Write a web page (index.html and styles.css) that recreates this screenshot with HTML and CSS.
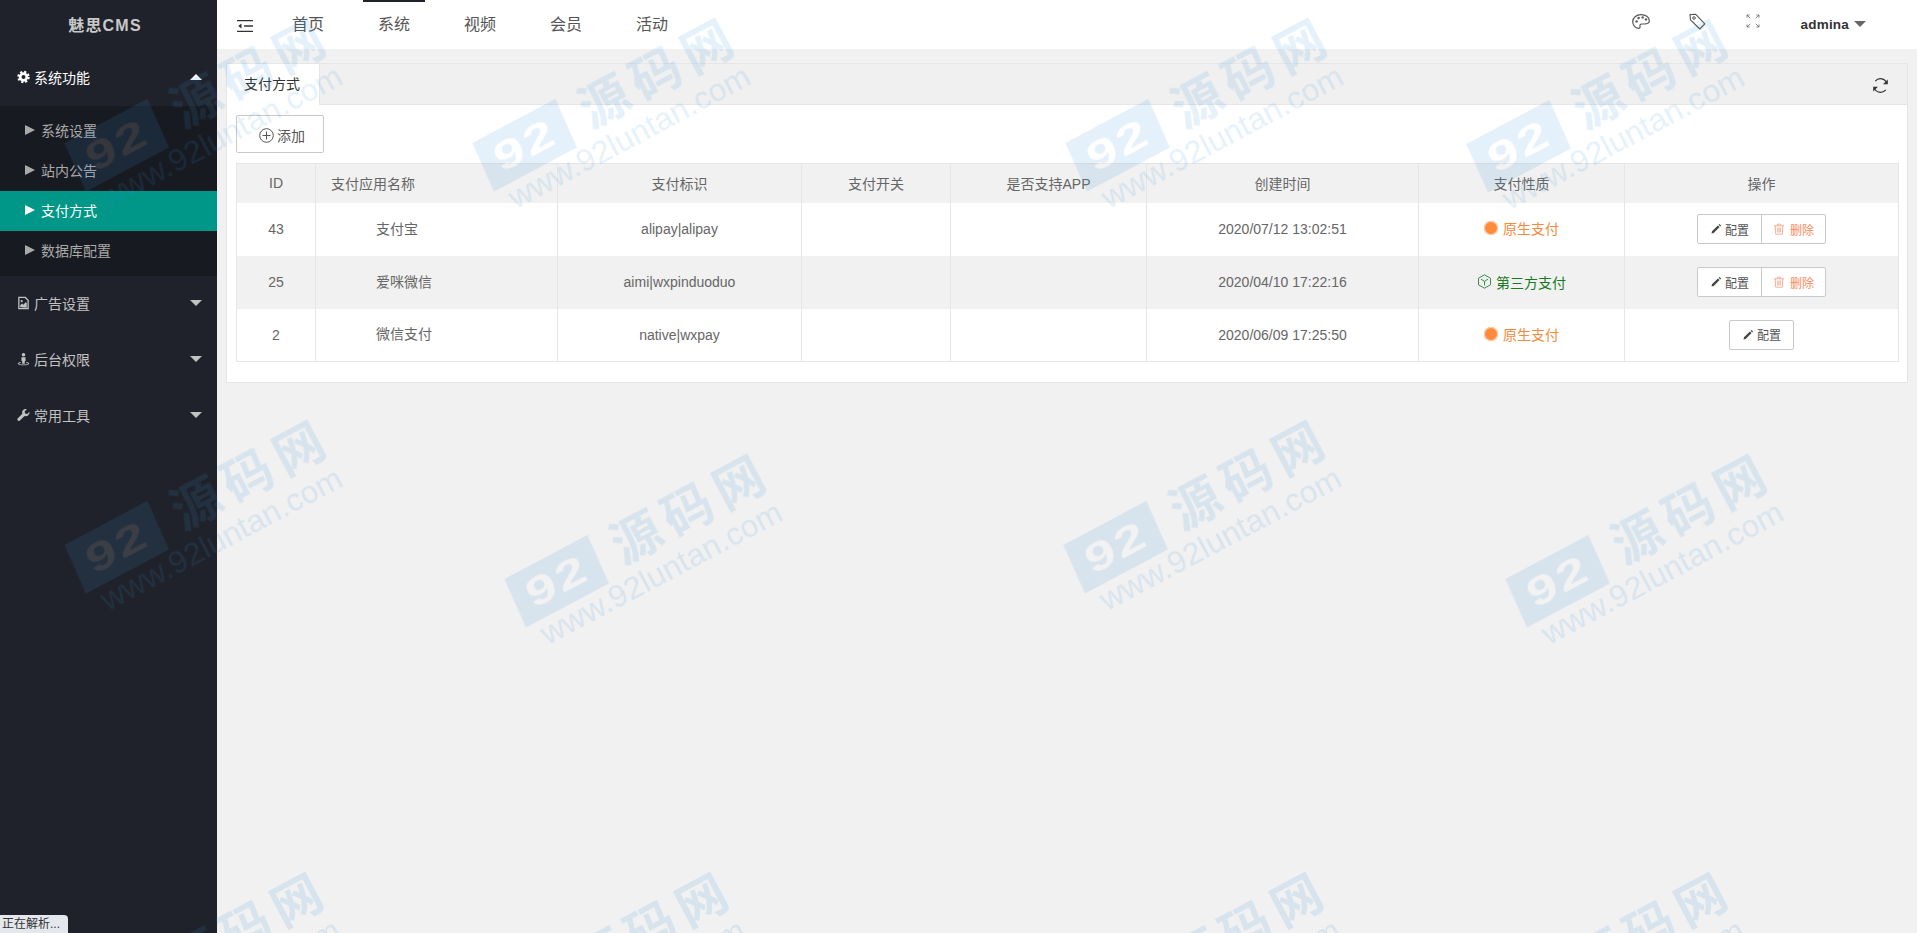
FILE: index.html
```html
<!DOCTYPE html>
<html lang="zh-CN">
<head>
<meta charset="utf-8">
<title>魅思CMS</title>
<link rel="stylesheet" href="styles.css">
</head>
<body>
<div class="app">
  <aside class="sidebar">
    <div class="logo">魅思CMS</div>
    <div class="menu-head open">
      <svg class="mi" viewBox="0 0 14 14"><circle cx="7" cy="7" r="3.6" fill="none" stroke="currentColor" stroke-width="3"/><circle cx="7" cy="7" r="5.6" fill="none" stroke="currentColor" stroke-width="2.2" stroke-dasharray="2.3 2.1"/></svg>
      <span class="mt">系统功能</span><i class="caret up"></i>
    </div>
    <ul class="submenu">
      <li class="sub"><span class="tri"></span>系统设置</li>
      <li class="sub"><span class="tri"></span>站内公告</li>
      <li class="sub active"><span class="tri"></span>支付方式</li>
      <li class="sub"><span class="tri"></span>数据库配置</li>
    </ul>
    <div class="menu-head">
      <svg class="mi" viewBox="0 0 14 14"><path d="M2 1h7l3 3v9H2z" fill="none" stroke="currentColor" stroke-width="1.4"/><path d="M3.500 11.500V9.500l2-2 1.500 1.500 2.500-3 1 1v5z" fill="currentColor"/><circle cx="5" cy="5" r="1.100" fill="currentColor"/></svg>
      <span class="mt">广告设置</span><i class="caret"></i>
    </div>
    <div class="menu-head">
      <svg class="mi" viewBox="0 0 14 14"><circle cx="7" cy="2.400" r="1.900" fill="currentColor"/><path d="M4.800 5h4.400v4.200H8.400V12H5.600V9.200h-.8z" fill="currentColor"/><path d="M4 10.200C2 10.600.8 11.200.8 12c0 1 2.800 1.600 6.200 1.600s6.200-.6 6.200-1.600c0-.8-1.200-1.400-3.200-1.800v1c1.200.2 2 .5 2 .8 0 .5-2.200.9-5 .9s-5-.4-5-.9c0-.3.8-.6 2-.8z" fill="currentColor"/></svg>
      <span class="mt">后台权限</span><i class="caret"></i>
    </div>
    <div class="menu-head">
      <svg class="mi" viewBox="0 0 14 14"><path d="M13.400 3.600 11 6l-2.200-.6L8.200 3.200 10.600.7C8.800.1 6.900.8 6 2.400c-.6 1.100-.6 2.300-.2 3.300L.9 10.600c-.7.700-.7 1.700 0 2.300.7.700 1.700.7 2.300 0l4.900-4.900c1.100.4 2.300.3 3.400-.3 1.500-.9 2.300-2.500 1.900-4.100z" fill="currentColor"/></svg>
      <span class="mt">常用工具</span><i class="caret"></i>
    </div>
  </aside>

  <div class="main">
    <header class="topbar">
      <svg class="fold" viewBox="0 0 16 12"><path d="M0 .6h16M7 6h9M0 11.400h16" stroke="#333" stroke-width="1.300" fill="none"/><path d="M4.500 3.600 1.200 6l3.300 2.400z" fill="#333"/></svg>
      <nav class="nav">
        <a class="nav-item">首页</a>
        <a class="nav-item current">系统</a>
        <a class="nav-item">视频</a>
        <a class="nav-item">会员</a>
        <a class="nav-item">活动</a>
      </nav>
      <div class="tools">
        <svg class="tool palette" viewBox="0 0 18 15"><path d="M9 .7C4.200.7.700 3.900.700 7.800c0 3.600 2.900 6.500 5.600 6.500 1.700 0 2-1.100 1.700-2.100-.4-1.300.4-2.200 1.700-2.200h2.800c2.500 0 4.800-1.100 4.800-3.200C17.300 3 13.500.7 9 .7z" fill="none" stroke="#555" stroke-width="1.200"/><circle cx="4.600" cy="7.400" r="1.200" fill="#555"/><circle cx="6.600" cy="4" r="1.200" fill="#555"/><circle cx="10.600" cy="3.400" r="1.200" fill="#555"/><circle cx="14" cy="5.400" r="1.200" fill="#555"/></svg>
        <svg class="tool tag" viewBox="0 0 17 17"><path d="M1 1.600 1.500 6.800 10.800 16l5-5.200L6.500 1.200z" fill="none" stroke="#555" stroke-width="1.100" stroke-linejoin="round"/><circle cx="5" cy="5" r="1.300" fill="none" stroke="#555"/></svg>
        <svg class="tool expand" viewBox="0 0 14 14"><path d="M1 3.600V1h2.600M1.200 1.200 4.200 4.200M10.400 1H13v2.600M12.800 1.200 9.800 4.200M1 10.400V13h2.600M1.200 12.800l3-3M10.400 13H13v-2.600M12.800 12.800l-3-3" fill="none" stroke="#666" stroke-width=".8"/></svg>
        <span class="user">admina</span><i class="caret user-caret"></i>
      </div>
    </header>

    <section class="card">
      <div class="tabs">
        <div class="tab">支付方式</div>
        <svg class="refresh" viewBox="0 0 17 17"><path d="M14.900 6.400A6.700 6.700 0 0 0 3.300 4.200M2.100 10.600a6.700 6.700 0 0 0 11.600 2.200" fill="none" stroke="#333" stroke-width="1.200"/><path d="M15.800 2.400v4.800h-4.800zM1.200 14.600V9.800H6z" fill="#333"/></svg>
      </div>
      <div class="card-body">
        <button class="add-btn">
          <svg class="plus" viewBox="0 0 15 15"><circle cx="7.500" cy="7.500" r="6.800" fill="none" stroke="#555"/><path d="M7.500 3.500v8M3.500 7.500h8" stroke="#555"/></svg>添加
        </button>
        <table class="grid">
          <colgroup>
            <col class="c1"><col class="c2"><col class="c3"><col class="c4"><col class="c5"><col class="c6"><col class="c7"><col class="c8">
          </colgroup>
          <thead>
            <tr><th>ID</th><th class="left">支付应用名称</th><th>支付标识</th><th>支付开关</th><th>是否支持APP</th><th>创建时间</th><th>支付性质</th><th>操作</th></tr>
          </thead>
          <tbody>
            <tr>
              <td>43</td><td class="name">支付宝</td><td>alipay|alipay</td><td></td><td></td><td>2020/07/12 13:02:51</td>
              <td class="kind"><span class="native"><i class="dot"></i>原生支付</span></td>
              <td><span class="group">
                <span class="btn"><svg class="pen" viewBox="0 0 12 12"><path d="M1.500 10.500l.5-2.200L7.900 2.400l1.700 1.700-5.900 5.900zM8.600 1.700l.8-.8 1.700 1.700-.8.800z" fill="#444"/></svg>配置</span><span class="btn del"><svg class="trash" viewBox="0 0 12 12"><path d="M1 2.800h10M4.300 2.500V1.200h3.400v1.300M2.200 2.800l.5 8.400h6.600l.5-8.400M4.700 4.500v5M7.300 4.500v5M6 4.500v5" fill="none" stroke="#f9a58a" stroke-width=".9"/></svg>删除</span>
              </span></td>
            </tr>
            <tr class="stripe">
              <td>25</td><td class="name">爱咪微信</td><td>aimi|wxpinduoduo</td><td></td><td></td><td>2020/04/10 17:22:16</td>
              <td><span class="third"><svg class="cube" viewBox="0 0 15 15"><path d="M7.500.8 13.500 4.200v6.600L7.500 14.200 1.500 10.800V4.200z" fill="none" stroke="#3f8a4f" stroke-width="1"/><path d="M4 5.200l3.500 2.200L11 5.200M7.500 7.400v4" fill="none" stroke="#3f8a4f" stroke-width="1"/></svg>第三方支付</span></td>
              <td><span class="group">
                <span class="btn"><svg class="pen" viewBox="0 0 12 12"><path d="M1.500 10.500l.5-2.200L7.900 2.400l1.700 1.700-5.900 5.900zM8.600 1.700l.8-.8 1.700 1.700-.8.800z" fill="#444"/></svg>配置</span><span class="btn del"><svg class="trash" viewBox="0 0 12 12"><path d="M1 2.800h10M4.300 2.500V1.200h3.400v1.300M2.200 2.800l.5 8.400h6.600l.5-8.400M4.700 4.500v5M7.300 4.500v5M6 4.500v5" fill="none" stroke="#f9a58a" stroke-width=".9"/></svg>删除</span>
              </span></td>
            </tr>
            <tr>
              <td>2</td><td class="name">微信支付</td><td>native|wxpay</td><td></td><td></td><td>2020/06/09 17:25:50</td>
              <td class="kind"><span class="native"><i class="dot"></i>原生支付</span></td>
              <td><span class="group">
                <span class="btn"><svg class="pen" viewBox="0 0 12 12"><path d="M1.500 10.500l.5-2.200L7.900 2.400l1.700 1.700-5.900 5.900zM8.600 1.700l.8-.8 1.700 1.700-.8.800z" fill="#444"/></svg>配置</span>
              </span></td>
            </tr>
          </tbody>
        </table>
      </div>
    </section>
  </div>
</div>

<div class="status">正在解析...</div>

<div class="wm w1"><div class="wm-top"><span class="wm-block"><span class="wm-num">92</span></span><span class="wm-cn">源码网</span></div><div class="wm-url">www.92luntan.com</div></div>
<div class="wm w2"><div class="wm-top"><span class="wm-block"><span class="wm-num">92</span></span><span class="wm-cn">源码网</span></div><div class="wm-url">www.92luntan.com</div></div>
<div class="wm w3"><div class="wm-top"><span class="wm-block"><span class="wm-num">92</span></span><span class="wm-cn">源码网</span></div><div class="wm-url">www.92luntan.com</div></div>
<div class="wm w4"><div class="wm-top"><span class="wm-block"><span class="wm-num">92</span></span><span class="wm-cn">源码网</span></div><div class="wm-url">www.92luntan.com</div></div>
<div class="wm w5"><div class="wm-top"><span class="wm-block"><span class="wm-num">92</span></span><span class="wm-cn">源码网</span></div><div class="wm-url">www.92luntan.com</div></div>
<div class="wm w6"><div class="wm-top"><span class="wm-block"><span class="wm-num">92</span></span><span class="wm-cn">源码网</span></div><div class="wm-url">www.92luntan.com</div></div>
<div class="wm w7"><div class="wm-top"><span class="wm-block"><span class="wm-num">92</span></span><span class="wm-cn">源码网</span></div><div class="wm-url">www.92luntan.com</div></div>
<div class="wm w8"><div class="wm-top"><span class="wm-block"><span class="wm-num">92</span></span><span class="wm-cn">源码网</span></div><div class="wm-url">www.92luntan.com</div></div>
<div class="wm w9"><div class="wm-top"><span class="wm-block"><span class="wm-num">92</span></span><span class="wm-cn">源码网</span></div><div class="wm-url">www.92luntan.com</div></div>
<div class="wm w10"><div class="wm-top"><span class="wm-block"><span class="wm-num">92</span></span><span class="wm-cn">源码网</span></div><div class="wm-url">www.92luntan.com</div></div>
<div class="wm w11"><div class="wm-top"><span class="wm-block"><span class="wm-num">92</span></span><span class="wm-cn">源码网</span></div><div class="wm-url">www.92luntan.com</div></div>
<div class="wm w12"><div class="wm-top"><span class="wm-block"><span class="wm-num">92</span></span><span class="wm-cn">源码网</span></div><div class="wm-url">www.92luntan.com</div></div>
</body>
</html>
```

FILE: styles.css
```css
* { box-sizing: border-box; }
html, body { margin: 0; height: 100%; overflow: hidden; }
body {
  font-family: "Liberation Sans", "Noto Sans CJK SC", sans-serif;
  font-size: 14px;
  color: #666;
  background: #f1f1f1;
}
.app { display: flex; height: 100vh; }

/* sidebar */
.sidebar { width: 217px; flex: none; background: #1f222a; color: #c2c2c2; }
.logo {
  height: 50px;
  padding: 0 7px 3px 0;
  display: flex; align-items: center; justify-content: center;
  font-size: 16px; font-weight: 700; letter-spacing: 1.200px; color: #c9c9c9;
}
.menu-head {
  position: relative;
  height: 56px;
  display: flex; align-items: center;
  padding: 0 0 2px 17px;
}
.menu-head.open { color: #fff; }
.mi { width: 13px; height: 14px; margin-right: 4px; flex: none; }
.mt { flex: 1; }
.caret {
  width: 0; height: 0;
  margin-right: 15px;
  border-left: 6px solid transparent;
  border-right: 6px solid transparent;
  border-top: 6px solid #c2c2c2;
}
.caret.up { border-top: 0; border-bottom: 6px solid #fff; }
.submenu { list-style: none; margin: 0; padding: 5px 0; background: #181a21; }
.sub { height: 40px; display: flex; align-items: center; padding: 0 0 2px 25px; color: #aaa; }
.sub.active { background: #009688; color: #fff; }
.tri {
  width: 0; height: 0; margin-right: 6px;
  border-top: 5px solid transparent;
  border-bottom: 5px solid transparent;
  border-left: 10px solid currentColor;
}

/* main */
.main { flex: 1; min-width: 0; }
.topbar {
  height: 49px;
  background: #fff;
  display: flex; align-items: center;
  padding-left: 20px;
}
.fold { width: 16px; height: 12px; flex: none; margin-top: 3px; }
.nav { display: flex; margin-left: 12px; align-self: stretch; }
.nav-item {
  position: relative;
  width: 86px;
  display: flex; align-items: center; justify-content: center;
  padding-bottom: 4px;
  font-size: 16px; color: #555;
}
.nav-item.current::before {
  content: ""; position: absolute; top: 0; left: 12px; width: 62px; height: 2px; background: #20222a;
}
.tools { margin-left: auto; display: flex; align-items: center; padding-bottom: 1px; }
.tool { flex: none; }
.palette { width: 18px; height: 15px; margin-top: -5px; }
.tag { width: 17px; height: 17px; margin-left: 39px; margin-top: -6px; }
.expand { width: 14px; height: 14px; margin-left: 40px; margin-top: -6px; }
.user { margin-left: 41px; color: #333; font-weight: 700; font-size: 13.500px; letter-spacing: .2px; }
.user-caret { margin-left: 5px; margin-right: 51px; border-top-color: #666; }

/* card */
.card {
  margin: 14px 9px 0;
  background: #fff;
  border: 1px solid #e6e6e6;
  height: 320px;
}
.tabs {
  height: 41px;
  background: #f0f0f0;
  border-bottom: 1px solid #e6e6e6;
  display: flex; justify-content: space-between; align-items: center;
  padding-right: 18px;
}
.tab {
  width: 93px; height: 41px;
  background: #fff;
  border-right: 1px solid #e6e6e6;
  color: #333;
  display: flex; align-items: center; padding: 0 0 2px 17px;
}
.refresh { width: 17px; height: 17px; margin-top: 2px; }
.card-body { padding: 10px 9px; }
.add-btn {
  width: 88px; height: 38px;
  background: #fff;
  border: 1px solid #c9c9c9;
  border-radius: 2px;
  font: inherit; color: #555;
  display: flex; align-items: center; padding: 2px 0 0 22px;
}
.plus { width: 15px; height: 15px; margin-right: 3px; }
.grid {
  width: 1662px;
  margin-top: 10px;
  table-layout: fixed;
  border-collapse: collapse;
  border: 1px solid #e6e6e6;
}
.c1 { width: 79px; } .c2 { width: 242px; } .c3 { width: 244px; } .c4 { width: 149px; }
.c5 { width: 196px; } .c6 { width: 272px; } .c7 { width: 206px; } .c8 { width: 274px; }
.grid th, .grid td { border-left: 1px solid #e6e6e6; border-right: 1px solid #e6e6e6; padding: 0; text-align: center; font-weight: 400; color: #666; }
.grid thead tr { height: 39px; background: #f1f1f1; }
.grid tbody tr { height: 53px; }
.grid tr.stripe { background: #f1f1f1; }
.grid th.left { text-align: left; padding-left: 15px; }
.grid td.name { text-align: left; padding-left: 60px; padding-bottom: 3px; }
.grid td.kind { padding-bottom: 2px; }
.native { color: #f68a3c; display: inline-flex; align-items: center; }
.dot {
  width: 14px; height: 14px; margin-right: 5px; border-radius: 50%;
  background: #ff8c3a;
  box-shadow: inset 0 0 0 1px #ffd0b0;
}
.third { color: #197a1e; display: inline-flex; align-items: center; font-size: 14px; }
.cube { width: 15px; height: 15px; margin-right: 4px; }
.group { display: inline-flex; vertical-align: middle; border: 1px solid #c9c9c9; border-radius: 2px; background: #fff; height: 30px; }
.btn {
  width: 63px;
  display: flex; align-items: center; justify-content: center;
  font-size: 12px; color: #555;
}
.btn.del { width: 64px; border-left: 1px solid #c9c9c9; color: #f9895c; }
.pen { width: 12px; height: 12px; margin-right: 3px; }
.trash { width: 12px; height: 12px; margin-right: 5px; }

/* browser status bubble */
.status {
  position: fixed; left: 0; bottom: 0;
  width: 68px; height: 18px;
  padding: 2px 0 0 2px;
  background: #e4e7ec;
  border-top-right-radius: 4px;
  font-size: 12px; line-height: 15px; color: #333;
  white-space: nowrap;
}

/* watermark overlay */
.wm {
  position: fixed;
  width: 300px;
  transform: translate(-50%, -50%) rotate(-28deg);
  opacity: .125;
  color: #2f90d8;
  pointer-events: none;
}
.wm-top { display: flex; align-items: center; margin-top: 7px; padding-left: 13px; }
.wm-block {
  width: 94px; height: 53px; flex: none;
  display: flex; align-items: center; justify-content: center;
  background: #2f90d8;
  color: #fff;
  font-size: 42px; font-weight: 700;
  transform: skewX(-4deg);
}
.wm-num { display: inline-block; transform: scale(1.300, .95); letter-spacing: 2px; }
.wm-cn {
  margin-left: 19px;
  font-size: 50px; font-weight: 700; line-height: 56px;
  letter-spacing: 8px;
  white-space: nowrap;
}
.wm-url {
  margin: -5px 0 0 22px;
  font-size: 32px; line-height: 38px;
  white-space: nowrap;
}
.w1 { left: 202px; top: 114px; }
.w2 { left: 610px; top: 114px; }
.w3 { left: 1203px; top: 114px; }
.w4 { left: 1604px; top: 115px; }
.w5 { left: 202px; top: 516px; }
.w6 { left: 642px; top: 550px; }
.w7 { left: 1201px; top: 516px; }
.w8 { left: 1643px; top: 550px; }
.w9 { left: 200px; top: 968px; }
.w10 { left: 605px; top: 968px; }
.w11 { left: 1200px; top: 968px; }
.w12 { left: 1604px; top: 968px; }
```
